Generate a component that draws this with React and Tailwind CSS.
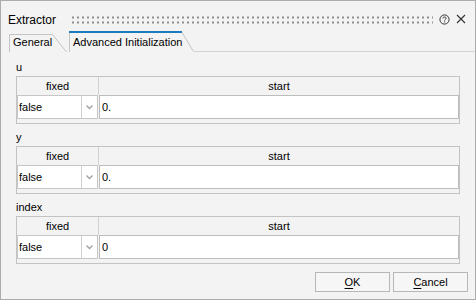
import React from 'react';

const font = { fontFamily: '"Liberation Sans", Arial, sans-serif' };

const HelpIcon = () => (
  <svg width="11" height="11" viewBox="0 0 11 11" className="mt-[13px]">
    <circle cx="5.5" cy="5.5" r="4.6" fill="none" stroke="#333" strokeWidth="1" />
    <path d="M3.9 4.4 C3.9 3.4 4.6 3 5.5 3 C6.4 3 7.1 3.5 7.1 4.3 C7.1 5.2 5.6 5.4 5.6 6.5" fill="none" stroke="#333" strokeWidth="1" />
    <rect x="5.1" y="7.3" width="1" height="1" fill="#333" />
  </svg>
);

const CloseIcon = () => (
  <svg width="10" height="10" viewBox="0 0 10 10" className="mt-[13px]">
    <path d="M1 1 L9 9 M9 1 L1 9" stroke="#333" strokeWidth="1.1" />
  </svg>
);

const Grip = () => (
  <svg className="flex-1 h-[10px] mt-[14px]">
    <defs>
      <pattern id="grip" width="5" height="5" patternUnits="userSpaceOnUse">
        <rect x="1" y="1.5" width="2" height="2" fill="#8e8e8e" />
      </pattern>
    </defs>
    <rect width="100%" height="100%" fill="url(#grip)" />
  </svg>
);

const Arrow = () => (
  <svg width="7" height="5" viewBox="0 0 7 5">
    <path d="M0.5 0.5 L3.5 3.5 L6.5 0.5" fill="none" stroke="#a3a3a3" strokeWidth="1.4" />
  </svg>
);

const ParamTable = ({ label, value }) => (
  <div className="flex flex-col">
    <div className="h-[14px] leading-[14px] text-[11px] text-black">{label}</div>
    <div className="mt-[2px] h-[48px] border border-[#c3c3c3] flex flex-col">
      <div className="flex h-[18px] text-[11px] leading-[18px] text-black">
        <div className="w-[82px] text-center border-r border-[#d2d2d2]">fixed</div>
        <div className="flex-1 text-center">start</div>
      </div>
      <div className="flex h-[24px] gap-[1px] text-[11px] text-black">
        <div className="w-[81px] h-full flex bg-white border border-[#c6c6c6]">
          <div className="flex-1 pl-[1px] leading-[22px]">false</div>
          <div className="w-[16px] border-l border-[#d0d0d0] flex items-center justify-center">
            <Arrow />
          </div>
        </div>
        <div className="flex-1 h-full bg-white border border-[#bdbdbd] pl-[2px] leading-[22px]">{value}</div>
      </div>
    </div>
  </div>
);

const App = () => {
  const params = [
    { label: 'u', value: '0.' },
    { label: 'y', value: '0.' },
    { label: 'index', value: '0' },
  ];

  return (
    <div style={font} className="w-[476px] h-[300px] border border-[#acacac] bg-[#f3f3f3] flex flex-col overflow-hidden">
      {/* title bar */}
      <div className="h-[30px] flex items-start pl-[7px] pr-[9px]">
        <div className="mt-[12px] text-[12px] leading-[14px] text-black">Extractor</div>
        <div className="flex-1 flex ml-[15px] mr-[6px]">
          <Grip />
        </div>
        <HelpIcon />
        <div className="ml-[6px]">
          <CloseIcon />
        </div>
      </div>

      {/* tabs */}
      <div className="h-[21px] flex pl-[8px]">
        <div className="relative w-[58px] h-full pl-[4px] pt-[5px] text-[11px] leading-[13px] text-black">
          <svg className="absolute inset-0" width="58" height="21">
            <path d="M0.5 21 V3.5 H43.5 L57.5 21" fill="none" stroke="#c4c4c4" />
          </svg>
          <span className="relative">General</span>
        </div>
        <div className="relative w-[125px] h-full ml-[2px] pl-[4px] pt-[5px] text-[11px] leading-[13px] text-black">
          <svg className="absolute inset-0" width="125" height="21">
            <path d="M0.5 21 V1" fill="none" stroke="#c4c4c4" />
            <path d="M113 1.5 L124.5 20.5" fill="none" stroke="#c4c4c4" />
            <rect x="0" y="0" width="113" height="2" fill="#1a7bbd" />
          </svg>
          <span className="relative">Advanced Initialization</span>
        </div>
        <div className="flex-1 border-b border-[#d2d2d2]" />
      </div>

      {/* content */}
      <div className="flex flex-col gap-[6px] pt-[8px] pl-[15px] pr-[15px]">
        {params.map((p) => (
          <ParamTable key={p.label} label={p.label} value={p.value} />
        ))}
      </div>

      {/* buttons */}
      <div className="flex justify-end gap-[3px] mt-[8px] pr-[7px]">
        <button className="w-[75px] h-[20px] border border-[#b7b7b7] bg-[#f6f6f6] text-[11px] leading-[18px] text-black">
          <span className="underline underline-offset-[2px]">O</span>K
        </button>
        <button className="w-[75px] h-[20px] border border-[#b7b7b7] bg-[#f6f6f6] text-[11px] leading-[18px] text-black">
          <span className="underline underline-offset-[2px]">C</span>ancel
        </button>
      </div>
    </div>
  );
};

export default App;
